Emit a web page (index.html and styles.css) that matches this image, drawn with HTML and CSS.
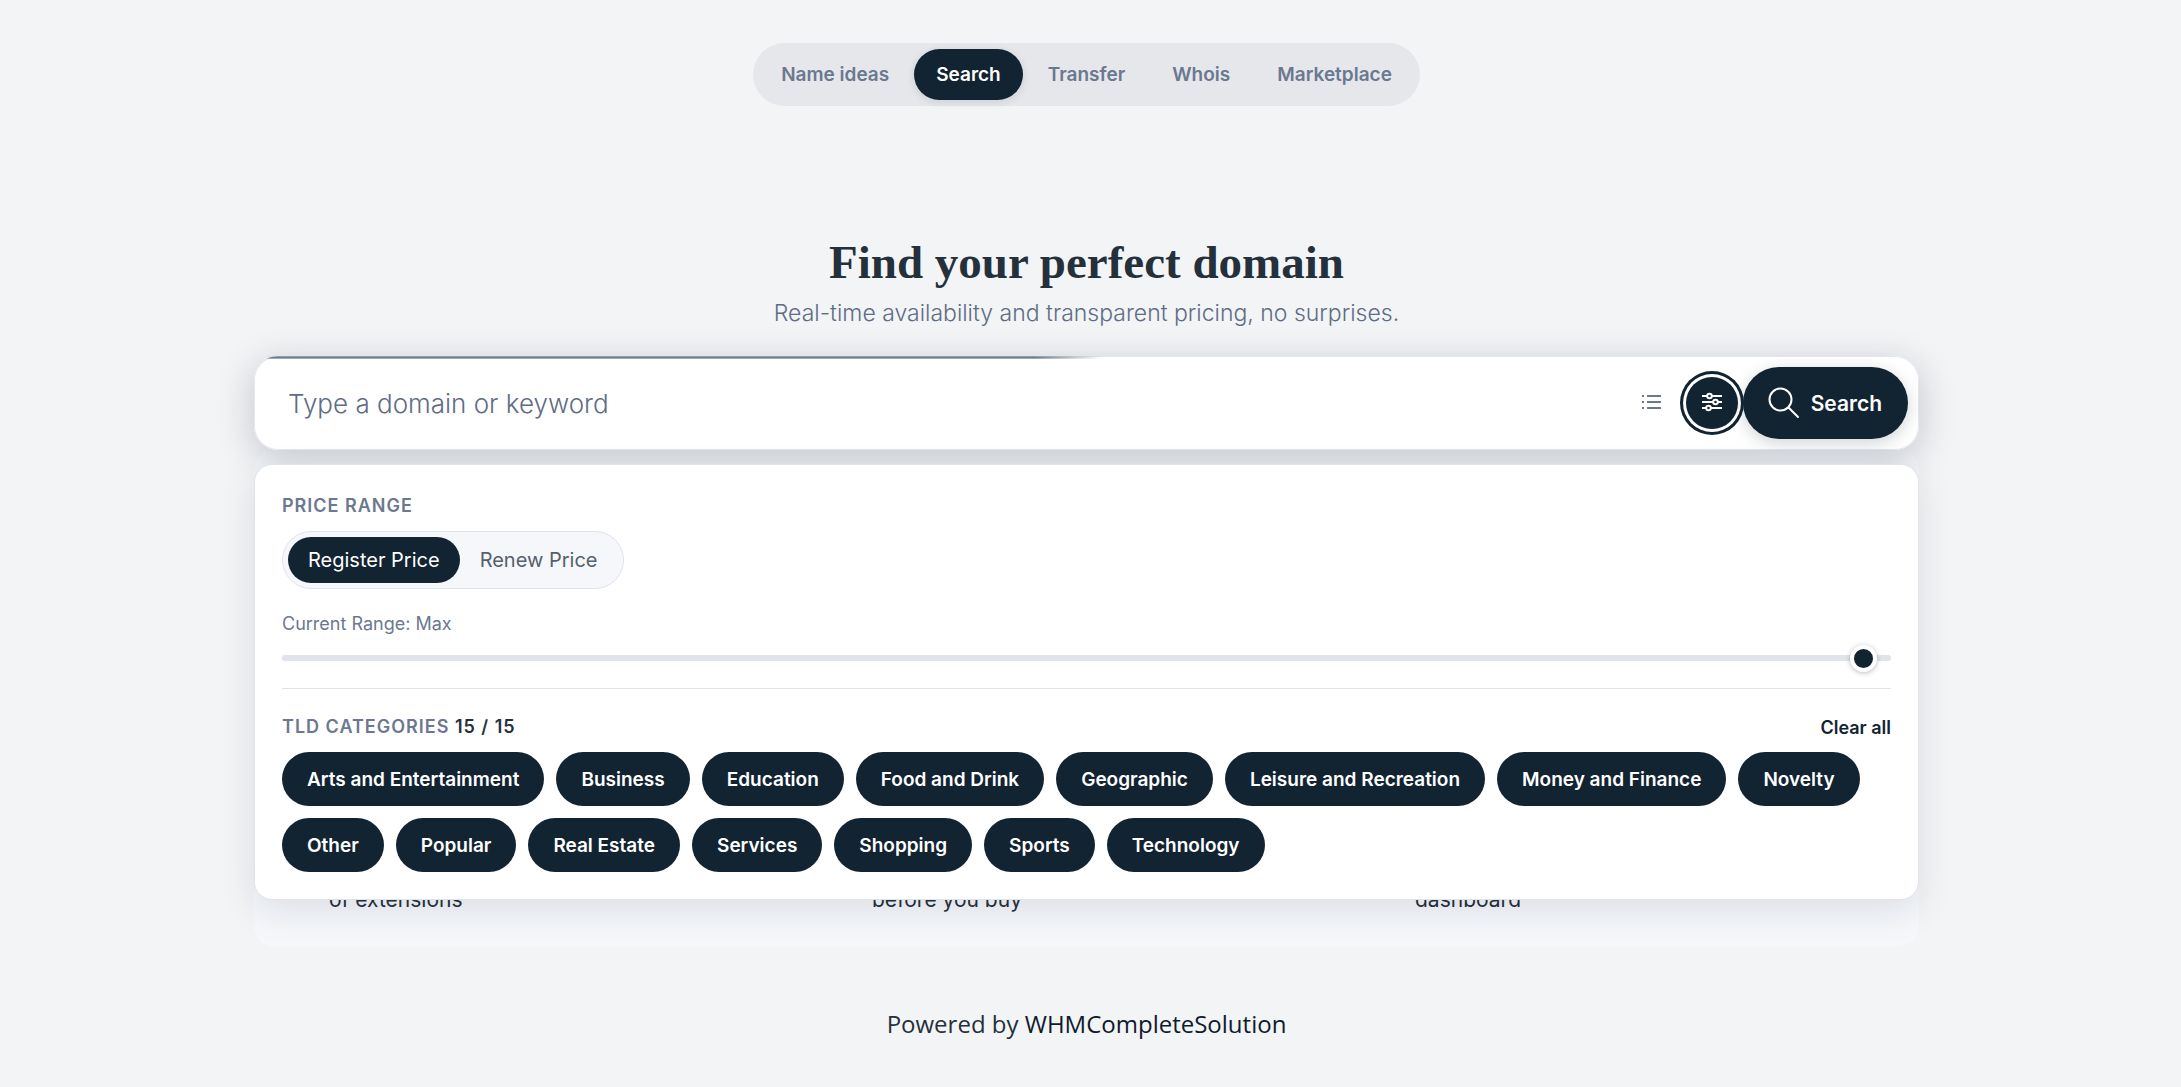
FILE: index.html
```html
<!DOCTYPE html>
<html lang="en">
<head>
    <meta charset="UTF-8">
    <meta name="viewport" content="width=device-width, initial-scale=1.0">
    <title>Domain Search</title>
    <link rel="stylesheet" href="styles.css">
</head>
<body>
    <nav class="tabs">
        <a href="#ideas">Name ideas</a>
        <a href="#search" class="active">Search</a>
        <a href="#transfer">Transfer</a>
        <a href="#whois">Whois</a>
        <a href="#marketplace">Marketplace</a>
    </nav>

    <main class="container">
        <header class="hero">
            <h1>Find your perfect domain</h1>
            <p>Real-time availability and transparent pricing, no surprises.</p>
        </header>

        <div class="search-wrap">
            <form class="search-card">
                <input type="text" class="search-input" placeholder="Type a domain or keyword" aria-label="Domain or keyword">
                <button type="button" class="icon-btn" aria-label="Bulk search">
                    <svg width="22" height="22" viewBox="0 0 22 22" fill="none" stroke="currentColor" stroke-width="2">
                        <path d="M6 4h14M6 10h14M6 16h14"/>
                        <path d="M1 4h2M1 10h2M1 16h2"/>
                    </svg>
                </button>
                <button type="button" class="icon-btn filter-btn" aria-label="Filters">
                    <svg width="22" height="22" viewBox="0 0 22 22" fill="none" stroke="currentColor" stroke-width="2">
                        <path d="M1 4h5M11 4h10M1 10h11M17 10h4M1 16h4M10 16h11"/>
                        <circle cx="8.500" cy="4" r="2.300"/>
                        <circle cx="14.500" cy="10" r="2.300"/>
                        <circle cx="7.500" cy="16" r="2.300"/>
                    </svg>
                </button>
                <button type="submit" class="search-btn">
                    <svg width="32" height="32" viewBox="0 0 32 32" fill="none" stroke="currentColor" stroke-width="2" stroke-linecap="round">
                        <circle cx="12.500" cy="12.500" r="11"/>
                        <path d="M20.500 20.500L30 30"/>
                    </svg>
                    Search
                </button>
            </form>

            <div class="filters">
                <h2 class="label">Price range</h2>
                <div class="toggle">
                    <button type="button" class="on">Register Price</button>
                    <button type="button">Renew Price</button>
                </div>
                <label class="range-label" for="price">Current Range: Max</label>
                <input type="range" id="price" class="range" min="0" max="1000" value="991">
                <hr>
                <div class="filters-head">
                    <h2 class="label">TLD categories <span>15 / 15</span></h2>
                    <button type="button" class="clear">Clear all</button>
                </div>
                <div class="chips">
                    <button type="button">Arts and Entertainment</button>
                    <button type="button">Business</button>
                    <button type="button">Education</button>
                    <button type="button">Food and Drink</button>
                    <button type="button">Geographic</button>
                    <button type="button">Leisure and Recreation</button>
                    <button type="button">Money and Finance</button>
                    <button type="button">Novelty</button>
                    <button type="button">Other</button>
                    <button type="button">Popular</button>
                    <button type="button">Real Estate</button>
                    <button type="button">Services</button>
                    <button type="button">Shopping</button>
                    <button type="button">Sports</button>
                    <button type="button">Technology</button>
                </div>
            </div>
        </div>

        <section class="features">
            <p>of extensions</p>
            <p>before you buy</p>
            <p>dashboard</p>
        </section>
    </main>

    <footer class="footer">
        Powered by <a href="#whmcs">WHMCompleteSolution</a>
    </footer>
</body>
</html>
```
FILE: styles.css
```css
* {
    box-sizing: border-box;
    margin: 0;
    padding: 0;
}

body {
    font-family: Inter, 'Liberation Sans', sans-serif;
    background: #f3f4f6;
    color: #25303d;
    padding: 43px 8px 0 0;
}

button,
input {
    font-family: inherit;
    border: none;
    background: none;
}

button {
    cursor: pointer;
}

a {
    text-decoration: none;
}

/* Top tabs */
.tabs {
    display: flex;
    gap: 3px;
    width: fit-content;
    margin: 0 auto;
    padding: 6px;
    background: #e5e7eb;
    border-radius: 32px;
}

.tabs a {
    padding: 0 22px;
    font-size: 19px;
    font-weight: 600;
    line-height: 51px;
    color: #6b7890;
    border-radius: 26px;
}

.tabs .active {
    background: #122332;
    color: #fff;
    box-shadow: 0 2px 8px rgba(18, 35, 50, 0.12);
}

.container {
    max-width: 1665px;
    margin: 0 auto;
}

.hero {
    padding: 124px 0 24px;
    text-align: center;
}

.hero h1 {
    font-family: 'Liberation Serif', serif;
    font-size: 47px;
    font-weight: 600;
    line-height: 64px;
}

.hero p {
    font-size: 23px;
    font-weight: 300;
    line-height: 38px;
    color: #5f6c85;
}

/* Search bar */
.search-wrap {
    position: relative;
}

.search-card {
    position: relative;
    overflow: hidden;
    display: flex;
    align-items: center;
    height: 94px;
    padding: 0 11px 0 34px;
    background: #fff;
    border-radius: 24px;
    box-shadow: inset 0 0 0 1px #e3e7ee;
}

.search-wrap::before {
    content: '';
    position: absolute;
    inset: 0;
    border-radius: 24px;
    box-shadow: 0 8px 36px rgba(20, 28, 40, 0.22);
}

.search-card::before {
    content: '';
    position: absolute;
    top: 0;
    left: 0;
    width: 51%;
    height: 3px;
    background: linear-gradient(#a3aeba, #6f7d8a, #b7bfc7);
    mask-image: linear-gradient(90deg, #000 92%, transparent);
}

.search-input {
    flex: 1;
    font-size: 26px;
    font-weight: 300;
    outline: none;
}

.search-input::placeholder {
    color: #5f6c85;
}

.icon-btn {
    display: flex;
    align-items: center;
    justify-content: center;
    width: 52px;
    height: 52px;
    margin-right: 8px;
    border-radius: 50%;
    color: #6b7890;
}

.filter-btn {
    margin-right: 5px;
    background: #122332;
    color: #fff;
    box-shadow: 0 0 0 3px #fff, 0 0 0 6px #122332;
}

.search-btn {
    display: flex;
    align-items: center;
    gap: 11px;
    height: 72px;
    padding: 0 26px 0 25px;
    border-radius: 36px;
    background: #122332;
    color: #fff;
    font-size: 21px;
    font-weight: 600;
    box-shadow: 0 4px 16px rgba(18, 35, 50, 0.2);
}

/* Filter panel, opens over the features block */
.filters {
    position: absolute;
    top: 108px;
    left: 0;
    right: 0;
    z-index: 2;
    padding: 27px;
    background: #fff;
    border: 1px solid #dfe3ea;
    border-radius: 18px;
    box-shadow: 0 10px 36px rgba(20, 28, 40, 0.11);
}

.label {
    font-size: 18px;
    font-weight: 600;
    line-height: 28px;
    letter-spacing: 1px;
    text-transform: uppercase;
    color: #6b7890;
}

.label span {
    color: #25303d;
}

.toggle {
    display: flex;
    width: fit-content;
    margin: 11px 0 21px;
    padding: 5px;
    background: #f5f7fb;
    border: 1px solid #dfe3ea;
    border-radius: 29px;
}

.toggle button {
    height: 46px;
    padding: 0 20px;
    border-radius: 24px;
    font-size: 20px;
    color: #56606b;
}

.toggle .on {
    background: #122332;
    color: #fff;
}

.range-label {
    display: block;
    font-size: 18px;
    line-height: 27px;
    color: #6b7890;
}

.range {
    display: block;
    width: 100%;
    height: 6px;
    margin: 18px 0 27px;
    appearance: none;
    background: #dfe3ea;
    border-radius: 3px;
}

.range::-webkit-slider-thumb {
    appearance: none;
    width: 27px;
    height: 27px;
    background: #122332;
    border: 4px solid #fff;
    border-radius: 50%;
    box-shadow: 0 1px 5px rgba(18, 35, 50, 0.3);
}

hr {
    border: none;
    border-top: 1px solid #dfe3ea;
}

.filters-head {
    display: flex;
    align-items: center;
    justify-content: space-between;
    padding: 24px 0 11px;
}

.clear {
    font-size: 18px;
    font-weight: 600;
    color: #122332;
}

.chips {
    display: flex;
    flex-wrap: wrap;
    gap: 12px;
}

.chips button {
    height: 54px;
    padding: 0 25px;
    border-radius: 27px;
    background: #122332;
    color: #fff;
    font-size: 19px;
    font-weight: 600;
}

.features {
    display: grid;
    grid-template-columns: repeat(3, 1fr);
    padding: 434px 18px 30px;
    background: #f5f7fb;
    border-radius: 20px;
}

.features p {
    padding-left: 57px;
    font-size: 21px;
    line-height: 32px;
}

.footer {
    padding: 60px 0 40px;
    text-align: center;
    font-family: 'Open Sans', sans-serif;
    font-size: 24px;
    line-height: 36px;
    color: #25303d;
}

.footer a {
    color: #101b2b;
}
```
